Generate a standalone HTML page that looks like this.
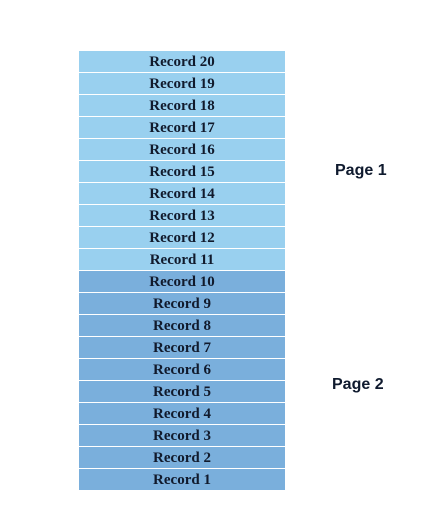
<!DOCTYPE html>
<html><head><style>
body{margin:0;width:425px;height:531px;background:#fff;position:relative;overflow:hidden}
.r{position:absolute;left:79px;width:206px;height:21px;font:bold 15px/23px "Liberation Serif",serif;color:#111a2c;text-align:center}
.l{background:#99d0ef}.d{background:#7aafdc}
.p{position:absolute;font:bold 16px "Liberation Sans",sans-serif;color:#0f1a2e}
</style></head><body>
<div class="r l" style="top:51px">Record 20</div>
<div class="r l" style="top:73px">Record 19</div>
<div class="r l" style="top:95px">Record 18</div>
<div class="r l" style="top:117px">Record 17</div>
<div class="r l" style="top:139px">Record 16</div>
<div class="r l" style="top:161px">Record 15</div>
<div class="r l" style="top:183px">Record 14</div>
<div class="r l" style="top:205px">Record 13</div>
<div class="r l" style="top:227px">Record 12</div>
<div class="r l" style="top:249px">Record 11</div>
<div class="r d" style="top:271px">Record 10</div>
<div class="r d" style="top:293px">Record 9</div>
<div class="r d" style="top:315px">Record 8</div>
<div class="r d" style="top:337px">Record 7</div>
<div class="r d" style="top:359px">Record 6</div>
<div class="r d" style="top:381px">Record 5</div>
<div class="r d" style="top:403px">Record 4</div>
<div class="r d" style="top:425px">Record 3</div>
<div class="r d" style="top:447px">Record 2</div>
<div class="r d" style="top:469px">Record 1</div>
<div class="p" style="left:335px;top:162px">Page 1</div>
<div class="p" style="left:332px;top:376px">Page 2</div>
</body></html>
